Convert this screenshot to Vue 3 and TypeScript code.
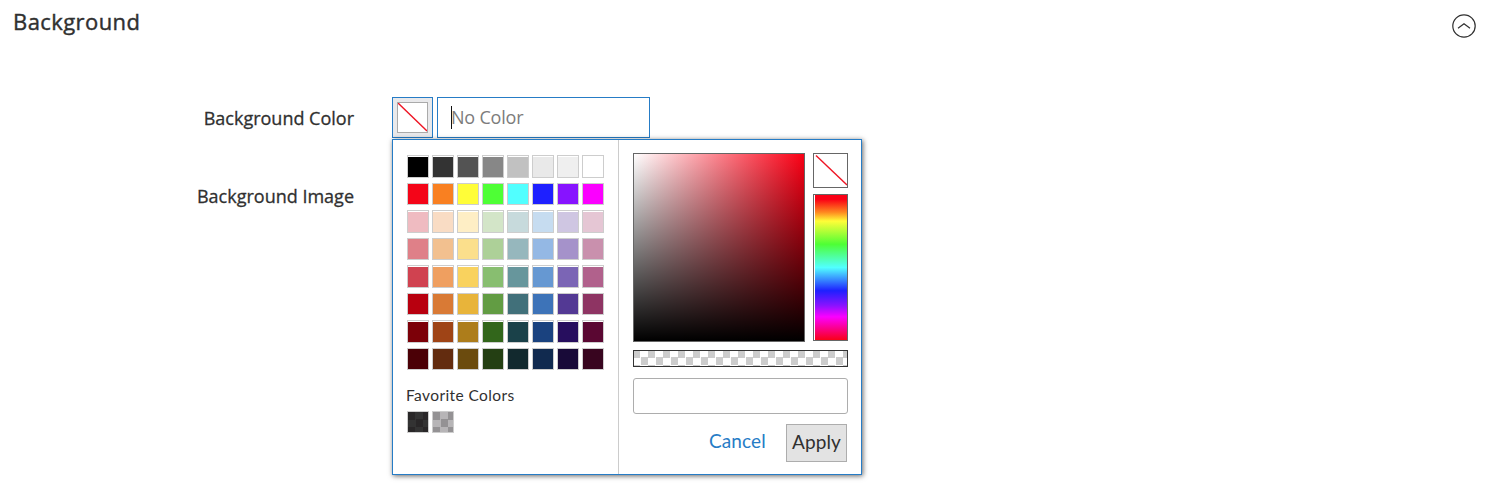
<script setup lang="ts">
import { ref } from 'vue'

const palette: string[][] = [
  ['#000000', '#333333', '#535353', '#878787', '#c1c1c1', '#e9e9e9', '#efefef', '#ffffff'],
  ['#f40518', '#f98021', '#fffd38', '#4eff35', '#51ffff', '#1e20ff', '#8713ff', '#fb00ff'],
  ['#efbbc1', '#f9dcc4', '#feeec5', '#d3e5c8', '#c7dadc', '#c6dcf0', '#cfc6e2', '#e5c6d4'],
  ['#df8088', '#f2c08f', '#fbdf8c', '#add098', '#96b7bd', '#94b8e4', '#a592ca', '#c990ad'],
  ['#d04250', '#ef9f60', '#f9d25e', '#88be70', '#67969c', '#6698d2', '#7b65b5', '#b1618c'],
  ['#b8000f', '#d97a35', '#e8b43a', '#629c43', '#41707a', '#3d73b8', '#533994', '#8e3463'],
  ['#7c0008', '#9f4416', '#ad7d1b', '#32661b', '#1a4149', '#1a427f', '#270e5e', '#5a0732'],
  ['#4b0006', '#632c0f', '#6b4b0e', '#243f13', '#12292e', '#112a4f', '#180a38', '#38051f'],
]

const color = ref('')
const customColor = ref('')
</script>

<template>
  <main class="page">
    <header class="section-head">
      <h2>Background</h2>
      <svg class="collapse" viewBox="0 0 24 24" width="24" height="24">
        <circle cx="12" cy="12" r="11.2" />
        <path d="M6 14.3 L12 9.8 L18 14.3" />
      </svg>
    </header>

    <div class="row">
      <span class="label">Background Color</span>
      <div class="field">
        <button class="trigger" type="button" aria-label="Pick color">
          <svg viewBox="0 0 29 29" width="29" height="29"><path d="M0 0 L29 28" /></svg>
        </button>
        <div class="color-input">
          <i class="caret"></i>
          <input v-model="color" placeholder="No Color" />
        </div>

        <div class="popup">
          <section class="palette-pane">
            <div class="grid">
              <template v-for="(line, r) in palette" :key="r">
                <span
                  v-for="c in line"
                  :key="c"
                  class="swatch"
                  :class="{ tall: r % 2 === 0 }"
                ><b :style="{ background: c }"></b></span>
              </template>
            </div>
            <div class="fav-title">Favorite Colors</div>
            <div class="favorites">
              <span class="swatch"><b class="checker dark"></b></span>
              <span class="swatch"><b class="checker mid"></b></span>
            </div>
          </section>

          <section class="picker-pane">
            <div class="pickers">
              <div class="shade"></div>
              <div class="side">
                <div class="clear">
                  <svg viewBox="0 0 33 33" width="33" height="33"><path d="M2 1.5 L33 31" /></svg>
                </div>
                <div class="hue"></div>
              </div>
            </div>
            <div class="alpha"><div class="checker light"></div></div>
            <input v-model="customColor" class="custom" />
            <div class="actions">
              <a class="cancel">Cancel</a>
              <button class="apply" type="button">Apply</button>
            </div>
          </section>
        </div>
      </div>
    </div>

    <div class="row image-row">
      <span class="label">Background Image</span>
    </div>
  </main>
</template>

<style>
body {
  margin: 0;
  background: #fff;
}
</style>

<style scoped>
* {
  box-sizing: border-box;
}
.page {
  height: 497px;
  overflow: hidden;
  font-family: 'Open Sans', 'Noto Sans', sans-serif;
  color: #303030;
}
.section-head {
  display: flex;
  justify-content: space-between;
  align-items: flex-start;
  height: 97px;
  padding: 0 17px 0 13px;
}
h2 {
  margin: 5px 0 0;
  font-size: 22px;
  line-height: 32px;
  font-weight: 400;
  letter-spacing: 0.42px;
  -webkit-text-stroke: 0.4px #303030;
}
.collapse {
  margin-top: 14px;
  fill: none;
  stroke: #303030;
  stroke-width: 1.2;
}
.row {
  display: flex;
}
.label {
  width: 354px;
  text-align: right;
  font-size: 18px;
  line-height: 42px;
  font-weight: 400;
  white-space: nowrap;
  -webkit-text-stroke: 0.3px #303030;
}
.image-row {
  margin-top: 36px;
}
.field {
  position: relative;
  display: flex;
  gap: 4px;
  margin-left: 38px;
}
.trigger {
  width: 41px;
  height: 41px;
  padding: 4px;
  border: 1px solid #267cc6;
  background: #e9e9eb;
}
.trigger svg {
  display: block;
  width: 31px;
  height: 31px;
  border: 1px solid #aaa;
  background: #fff;
}
.trigger path,
.clear path {
  stroke: #ee1524;
  stroke-width: 1.4;
  fill: none;
}
.color-input {
  display: flex;
  align-items: center;
  width: 213px;
  height: 41px;
  padding-left: 13px;
  border: 1px solid #267cc6;
}
.caret {
  width: 1px;
  height: 23px;
  margin-bottom: 1px;
  background: #111;
}
.color-input input {
  width: 160px;
  padding: 0;
  margin: 0 0 2px -1px;
  border: 0;
  outline: 0;
  font: 18px 'Open Sans', sans-serif;
  letter-spacing: -0.2px;
  background: none;
}
.color-input input::placeholder {
  color: #7c7c7c;
}
.popup {
  position: absolute;
  left: 0;
  top: 42px;
  display: flex;
  width: 470px;
  height: 336px;
  border: 1px solid #267cc6;
  background: #fff;
  box-shadow: 1px 1px 5px rgba(0, 0, 0, 0.6);
}
.palette-pane {
  width: 226px;
  padding: 15px 0 0 14px;
  border-right: 1px solid #ccc;
}
.grid {
  display: grid;
  grid-template-columns: repeat(8, 22px);
  grid-template-rows: 28px 27px 28px 27px 28px 27px 28px 27px;
  column-gap: 3px;
}
.swatch {
  display: block;
  width: 22px;
  height: 22px;
  border: 1px solid #cdcdcd;
}
.swatch b {
  display: block;
  height: 20px;
}
.swatch.tall {
  height: 23px;
  padding-top: 1px;
}
.fav-title {
  margin: 10px 0 0 -1px;
  height: 26px;
  font-family: Lato, sans-serif;
  font-size: 15.5px;
  line-height: 20px;
  letter-spacing: 0.4px;
}
.favorites {
  display: flex;
  gap: 3px;
}
.checker {
  --a: #ccc;
  --b: #fff;
  background: repeating-conic-gradient(var(--b) 0 25%, var(--a) 0 50%) 0 0 / 15px 15px;
}
.checker.dark {
  --a: #292728;
  --b: #333;
}
.checker.mid {
  --a: #949294;
  --b: #b7b5b7;
}
.picker-pane {
  padding: 13px 0 0 14px;
}
.pickers {
  display: flex;
  gap: 8px;
}
.shade {
  width: 172px;
  height: 189px;
  border: 1px solid #666;
  background: linear-gradient(to top, #000, transparent), linear-gradient(to right, #fff, #fa0015);
}
.side {
  display: flex;
  flex-direction: column;
  gap: 6px;
}
.clear {
  width: 35px;
  height: 35px;
  border: 1px solid #666;
}
.clear svg {
  display: block;
}
.hue {
  width: 35px;
  height: 147px;
  padding-left: 1px;
  border: 1px solid #666;
  background: linear-gradient(
      #fa0015 0%,
      #fa0015 3%,
      #fe8a20 12%,
      #fffd38 18%,
      #4eff35 34%,
      #51ffff 50%,
      #1e20ff 66%,
      #8713ff 76%,
      #fb00ff 84%,
      #f90018 100%
    )
    content-box;
}
.alpha {
  width: 215px;
  height: 17px;
  margin-top: 8px;
  border: 1px solid #333;
}
.checker.light {
  height: 15px;
  background-position: -1px -1px;
}
.custom {
  display: block;
  width: 215px;
  height: 36px;
  margin-top: 11px;
  border: 1px solid #adadad;
  border-radius: 3px;
  outline: 0;
}
.actions {
  display: flex;
  justify-content: flex-end;
  gap: 20px;
  width: 214px;
  margin-top: 10px;
  font-family: Lato, sans-serif;
  font-size: 19px;
}
.cancel {
  color: #267cc6;
  line-height: 33px;
  width: 57px;
  letter-spacing: 0.1px;
}
.apply {
  width: 61px;
  height: 38px;
  padding: 0 0 4px;
  border: 1px solid #adadad;
  background: #e3e3e3;
  color: #303030;
  font: 19px Lato, sans-serif;
  letter-spacing: 0.1px;
}
</style>
